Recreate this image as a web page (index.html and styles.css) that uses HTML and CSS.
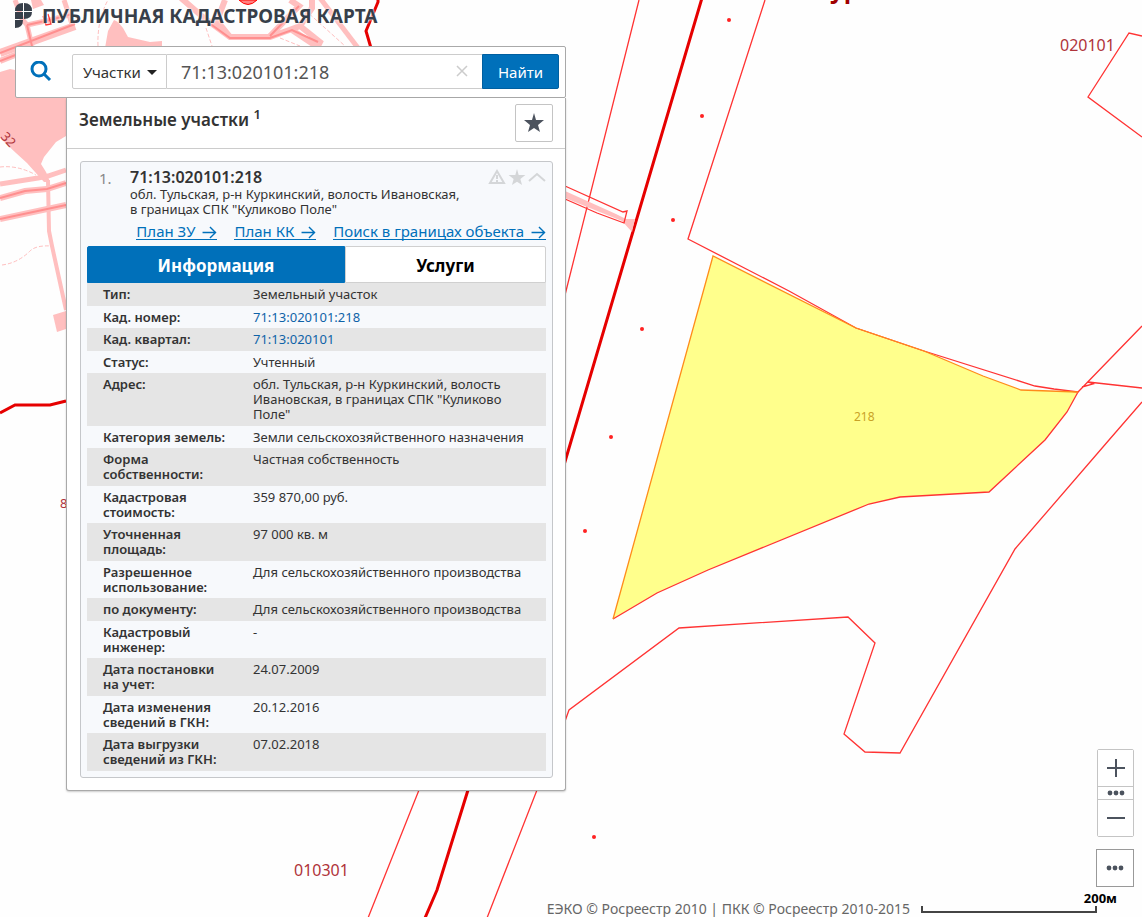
FILE: index.html
```html
<!DOCTYPE html>
<html lang="ru">

<head>
  <meta charset="UTF-8" />
  <meta name="viewport" content="width=device-width, initial-scale=1.0" />
  <title>Публичная кадастровая карта</title>
  <link rel="stylesheet" href="styles.css">
</head>

<body>
  <div class="page">
    <svg class="map" viewBox="0 0 1142 917" preserveAspectRatio="xMinYMin slice" aria-hidden="true">
      <!-- settlement in the corner -->
      <g class="town">
        <path d="M0 72L10 69L20 71L66 98V136L56 142L44 157L41 164L46 172L50 182H44L35 172L27 163L16 153L0 138Z" />
        <path d="M105 48L108 31L114 20L118 22L123 28L128 37L150 42L162 41V48Z" />
        <path d="M31 0H41L44 5L33 9Z" />
        <path d="M53 315L66 311V329L57 332Z" />
      </g>
      <g class="road">
        <path d="M0 53L75 26" stroke-width="8" />
        <path d="M0 61L20 53" stroke-width="6" />
        <path d="M15 0L22 19L27 25L32 46M27 25L50 20L72 14M64 0L72 24" stroke-width="5" />
        <path d="M181 -2L204 18L230 37H270L292 29L300 26L312 8V0M270 36L299 6L290 0M292 30L316 46M300 26L320 42L316 50M230 37L217 21L225 0" stroke-width="6" />
        <path d="M320 -2L358 48" stroke-width="5" />
        <path d="M0 184L38 178L48 176L66 170" stroke-width="5" />
        <path d="M0 198L25 191L47 189L66 183" stroke-width="6" />
        <path d="M0 219L66 205" stroke-width="6" />
        <path d="M48 180L49 231L52 246L66 310" stroke-width="4" />
      </g>
      <g class="road-axis">
        <path d="M0 53L75 24M0 61L18 54M27 25L32 46M27 25L50 20L72 14" />
        <path d="M205 20L230 38H270L292 30L318 42M270 36L299 6" />
        <path d="M0 198L25 191L47 189L66 183M0 219L66 205" />
      </g>
      <path class="trail" d="M0 167Q18 165 36 175M2 265Q18 263 30 251Q36 245 52 246M98 46Q97 20 108 0M206 28L212 46M280 38L300 46M305 10L345 46" />
      <path class="spot" d="M239 0Q248 9 257 0Z" />
      <path class="parcel" d="M43 16L46 25L51 24L48 14" />
      <path class="quarter" d="M378 -2V2L366 31L371 48" />

      <!-- quarter borders -->
      <path class="quarter" d="M702 -2L468 790L437 890L425 918M0 413L15 405H50L66 401" />
      <path class="parcel" d="M639 0L565 295M419 790L368 918M537 790L487 918" />
      <path class="flare" d="M565 191L616 214L626 219H635L632 232L622 221L565 198Z" />
      <path class="parcel" d="M565 186L623 212L627 211L624 223L597 213L565 199" />
      <path class="parcel" d="M1142 36L1129 33L1088 97L1142 137" />
      <path class="parcel" d="M1142 402L1109 440L1015 549L900 753L865 752L844 734L875 643L848 617L679 628L569 710L564 724" />

      <!-- selected plot -->
      <path class="plot" d="M713 256L856 328L924 351L983 376L1021 390L1078 392L1067 412L1045 440L989 492L900 497L869 504L708 570L657 593L613 619Z" />
      <path class="parcel" d="M1078 392L1067 412L1045 440L989 492L900 497L869 504L708 570L657 593L613 619" />
      <path class="parcel" d="M765 0L688 239L789 291L856 328L924 351L1035 386L1054 389L1078 392L1142 326M1082 387L1093 384L1088 382L1142 388" />
      <path class="plot-edge" d="M613 619L713 256L856 328L924 351L983 376L1021 390L1078 392" />

      <g class="dots">
        <circle cx="729" cy="20" r="2" />
        <circle cx="702" cy="116" r="2" />
        <circle cx="673" cy="220" r="2" />
        <circle cx="642" cy="329" r="2" />
        <circle cx="611" cy="437" r="2" />
        <circle cx="585" cy="531" r="2" />
        <circle cx="594" cy="837" r="2" />
      </g>
      <g class="labels">
        <text x="1060" y="51">020101</text>
        <text x="294" y="876">010301</text>
        <text class="small" x="60" y="508">8</text>
        <text class="small" transform="translate(0 137) rotate(48)">32</text>
        <text class="plot-no" x="854" y="421">218</text>
        <text class="place" x="830" y="-2">ур</text>
      </g>
    </svg>

    <header class="header">
      <svg class="logo" width="17" height="25" viewBox="0 0 17 25" aria-hidden="true">
        <path d="M8 0V8H0Q0 0 8 0ZM9 0Q17 0 17 8H9ZM9 9H17Q17 16 9 16ZM0 9H8V16H0ZM0 17H8Q8 25 0 25Z" />
      </svg>
      <h1>ПУБЛИЧНАЯ КАДАСТРОВАЯ КАРТА</h1>
    </header>

    <main class="panel">
      <form class="search">
        <svg class="search-icon" width="22" height="22" viewBox="0 0 22 22" aria-hidden="true">
          <circle cx="9" cy="8" r="7" />
          <path d="M14 13L20 19" />
        </svg>
        <div class="search-fields">
          <div class="select-wrap">
            <select class="kind" aria-label="Что искать">
              <option>Участки</option>
            </select>
            <svg class="caret" width="10" height="5" viewBox="0 0 10 5" aria-hidden="true">
              <path d="M0 0H10L5 5Z" />
            </svg>
          </div>
          <div class="query-wrap">
            <input class="query" type="text" value="71:13:020101:218" aria-label="Кадастровый номер" />
            <button class="clear" type="button" aria-label="Очистить">
              <svg width="12" height="12" viewBox="0 0 12 12">
                <path d="M1 1L11 11M11 1L1 11" />
              </svg>
            </button>
          </div>
          <button class="find" type="submit">Найти</button>
        </div>
      </form>

      <section class="results">
        <div class="results-head">
          <h2>Земельные участки <sup>1</sup></h2>
          <button class="favorites" aria-label="Избранное">
            <svg width="20" height="20" viewBox="0 0 20 20">
              <path d="M10 0L12 7H20L14 12L16 19L10 15L4 19L6 12L0 7H8Z" />
            </svg>
          </button>
        </div>

        <article class="card">
          <div class="card-head">
            <span class="num">1.</span>
            <div class="card-title">
              <h3>71:13:020101:218</h3>
              <p>обл. Тульская, р-н Куркинский, волость Ивановская, в&nbsp;границах СПК "Куликово Поле"</p>
            </div>
            <div class="card-tools">
              <button aria-label="Сообщить об ошибке">
                <svg width="18" height="16" viewBox="0 0 18 16">
                  <path class="line" d="M9 2L16 14H2Z" />
                  <path class="line" d="M9 6V10M9 11V13" />
                </svg>
              </button>
              <button aria-label="В избранное">
                <svg width="18" height="16" viewBox="0 0 20 19">
                  <path d="M10 0L12 7H20L14 12L16 19L10 15L4 19L6 12L0 7H8Z" />
                </svg>
              </button>
              <button aria-label="Свернуть">
                <svg width="18" height="16" viewBox="0 0 18 16">
                  <path class="line" d="M1 12L9 5L17 12" />
                </svg>
              </button>
            </div>
          </div>

          <nav class="card-links">
            <a href="#">План ЗУ <svg class="arrow" width="15" height="14" viewBox="0 0 15 14"><path d="M0 7H14M8 1L14 7L8 13" /></svg></a>
            <a href="#">План КК <svg class="arrow" width="15" height="14" viewBox="0 0 15 14"><path d="M0 7H14M8 1L14 7L8 13" /></svg></a>
            <a href="#">Поиск в границах объекта <svg class="arrow" width="15" height="14" viewBox="0 0 15 14"><path d="M0 7H14M8 1L14 7L8 13" /></svg></a>
          </nav>

          <div class="tabs">
            <button class="tab active">Информация</button>
            <button class="tab">Услуги</button>
          </div>

          <table class="info">
            <tr><th scope="row">Тип:</th><td>Земельный участок</td></tr>
            <tr><th scope="row">Кад. номер:</th><td><a href="#">71:13:020101:218</a></td></tr>
            <tr><th scope="row">Кад. квартал:</th><td><a href="#">71:13:020101</a></td></tr>
            <tr><th scope="row">Статус:</th><td>Учтенный</td></tr>
            <tr><th scope="row">Адрес:</th><td>обл. Тульская, р-н Куркинский, волость Ивановская, в границах СПК "Куликово Поле"</td></tr>
            <tr><th scope="row">Категория земель:</th><td>Земли сельскохозяйственного назначения</td></tr>
            <tr><th scope="row">Форма собственности:</th><td>Частная собственность</td></tr>
            <tr><th scope="row">Кадастровая стоимость:</th><td>359 870,00 руб.</td></tr>
            <tr><th scope="row">Уточненная площадь:</th><td>97 000 кв. м</td></tr>
            <tr><th scope="row">Разрешенное использование:</th><td>Для сельскохозяйственного производства</td></tr>
            <tr><th scope="row">по документу:</th><td>Для сельскохозяйственного производства</td></tr>
            <tr><th scope="row">Кадастровый инженер:</th><td>-</td></tr>
            <tr><th scope="row">Дата постановки на учет:</th><td>24.07.2009</td></tr>
            <tr><th scope="row">Дата изменения сведений в ГКН:</th><td>20.12.2016</td></tr>
            <tr><th scope="row">Дата выгрузки сведений из ГКН:</th><td>07.02.2018</td></tr>
          </table>
        </article>
      </section>
    </main>

    <div class="map-controls">
      <div class="zoom">
        <button aria-label="Приблизить">
          <svg width="18" height="18" viewBox="0 0 18 18"><path d="M0 9H18M9 0V18" /></svg>
        </button>
        <button class="zoom-levels" aria-label="Масштаб">
          <svg class="dots-icon" width="18" height="6" viewBox="0 0 18 6"><circle cx="3" cy="3" r="2.4" /><circle cx="9" cy="3" r="2.4" /><circle cx="15" cy="3" r="2.4" /></svg>
        </button>
        <button aria-label="Отдалить">
          <svg width="18" height="18" viewBox="0 0 18 18"><path d="M0 9H18" /></svg>
        </button>
      </div>
      <button class="more" aria-label="Ещё">
        <svg class="dots-icon" width="18" height="6" viewBox="0 0 18 6"><circle cx="3" cy="3" r="2.4" /><circle cx="9" cy="3" r="2.4" /><circle cx="15" cy="3" r="2.4" /></svg>
      </button>
    </div>

    <footer class="map-footer">
      <span class="copyright">ЕЭКО © Росреестр 2010 | ПКК © Росреестр 2010-2015</span>
      <div class="scale"><span>200м</span></div>
    </footer>
  </div>
</body>

</html>
```

FILE: styles.css
```css
* {
  box-sizing: border-box;
}

body {
  margin: 0;
  font-family: "Noto Sans", "Open Sans", sans-serif;
  font-size: 13px;
  line-height: 15px;
  color: #333;
  background: #fefefe;
}

button,
input,
select {
  font-family: inherit;
  color: inherit;
}

button {
  padding: 0;
  background: #fff;
  border: 1px solid #c4c4c4;
  cursor: pointer;
}

.page {
  position: relative;
  min-height: 100vh;
  padding-left: 15px;
  overflow: hidden;
}

/* map */
.map {
  position: absolute;
  top: 0;
  left: 0;
  width: 100%;
  height: 100%;
}

.map path {
  fill: none;
}

.map .town path,
.map .flare {
  fill: #ffbfbf;
}

.road path {
  stroke: #ffbfbf;
}

.road-axis path {
  stroke: #ff8f8f;
  stroke-width: 2;
}

.trail {
  stroke: #ffbfbf;
  stroke-dasharray: 4 2;
}

.map .spot {
  fill: #ff8080;
  stroke: #f00;
}

.parcel {
  stroke: #f33;
  stroke-width: 1.3;
}

.quarter {
  stroke: #e60000;
  stroke-width: 3;
}

.map .plot {
  fill: #ffff8c;
}

.plot-edge {
  stroke: #ff8c1a;
  stroke-width: 1.3;
}

.dots {
  fill: #f22;
}

.labels {
  font-size: 16px;
  fill: #b0343a;
}

.labels .small {
  font-size: 13px;
}

.labels .plot-no {
  font-size: 12px;
  fill: #c9a227;
}

.labels .place {
  font-size: 24px;
  font-weight: bold;
  fill: #a00000;
}

/* header */
.header {
  position: relative;
  display: flex;
  gap: 10px;
  height: 46px;
  padding-top: 3px;
}

.logo {
  fill: #373f4a;
}

.header h1 {
  margin: 0;
  font-size: 19px;
  line-height: 26px;
  color: #373f4a;
  text-shadow: 0 0 2px #fff, 0 0 2px #fff;
}

/* search */
.panel {
  position: relative;
  width: 551px;
  max-width: 100%;
}

.search {
  display: flex;
  align-items: center;
  justify-content: space-between;
  height: 52px;
  padding: 0 6px 1px 14px;
  background: #fff;
  border: 1px solid #a9a9a9;
  border-radius: 2px;
}

.search-icon {
  fill: none;
  stroke: #0070ba;
  stroke-width: 3;
}

.search-fields {
  display: flex;
  width: 487px;
  height: 35px;
}

.select-wrap {
  position: relative;
  width: 95px;
}

.kind {
  width: 100%;
  height: 100%;
  padding: 0 10px;
  font-size: 15px;
  appearance: none;
  background: #fff;
  border: 1px solid #ccc;
  border-radius: 2px 0 0 2px;
}

.caret {
  position: absolute;
  top: 16px;
  right: 10px;
  fill: #222;
  pointer-events: none;
}

.query-wrap {
  position: relative;
  flex: 1;
}

.query {
  width: 100%;
  height: 100%;
  padding: 0 40px 0 14px;
  font-size: 18px;
  color: #555;
  border: 1px solid #ccc;
  border-width: 1px 0;
}

.clear {
  position: absolute;
  top: 11px;
  right: 14px;
  display: flex;
  border: 0;
}

.clear svg {
  stroke: #ccc;
  stroke-width: 1.5;
}

.find {
  width: 77px;
  font-size: 15px;
  color: #fff;
  background: #0070ba;
  border-color: #005fa0;
  border-radius: 0 2px 2px 0;
}

/* results */
.results {
  margin-left: 51px;
  padding-bottom: 12px;
  background: #fff;
  border: 1px solid #a9a9a9;
  border-top: 0;
  border-radius: 0 0 3px 3px;
  box-shadow: 0 1px 2px rgba(0, 0, 0, 0.2);
}

.results-head {
  display: flex;
  justify-content: space-between;
  height: 51px;
  padding: 6px 12px;
  border-bottom: 1px solid #ccc;
}

.results-head h2 {
  margin: 0;
  font-size: 17px;
  font-weight: 600;
  line-height: 32px;
}

.results-head sup {
  font-size: 13px;
  line-height: 0;
}

.favorites {
  display: flex;
  align-items: center;
  justify-content: center;
  width: 38px;
  height: 38px;
  border-radius: 2px;
  fill: #4c535e;
}

/* object card */
.card {
  margin: 12px 12px 0 13px;
  padding: 6px;
  background: #f7f9fc;
  border: 1px solid #c5c7ca;
  border-radius: 3px;
}

.card-head {
  display: flex;
}

.num {
  width: 43px;
  padding-left: 12px;
  font-size: 15px;
  line-height: 20px;
  color: #888;
}

.card-title {
  flex: 1;
}

.card-title h3 {
  margin: 0;
  font-size: 16px;
  font-weight: 600;
  line-height: 19px;
}

.card-title p {
  margin: 0;
}

.card-tools {
  display: flex;
  gap: 2px;
  padding-top: 1px;
}

.card-tools button {
  display: flex;
  height: 16px;
  background: none;
  border: 0;
  fill: #d4d6d8;
}

.card-tools .line {
  fill: none;
  stroke: #d4d6d8;
  stroke-width: 2;
}

.card-links {
  display: flex;
  justify-content: flex-end;
  gap: 17px;
  padding: 7px 0 6px;
}

.card-links a {
  font-size: 15px;
  line-height: 15px;
  color: #0070ba;
  text-decoration: none;
  border-bottom: 1px solid #0070ba;
}

.arrow {
  height: 13px;
  margin-left: 3px;
  vertical-align: -2px;
  fill: none;
  stroke: #0070ba;
  stroke-width: 1.5;
}

.tabs {
  display: flex;
}

.tab {
  flex: 7;
  height: 37px;
  padding-top: 1px;
  font-size: 17px;
  font-weight: bold;
  color: #000;
  border-color: #d0d0d0;
  border-radius: 0 2px 0 0;
}

.tab.active {
  flex: 9;
  color: #fff;
  background: #0070ba;
  border-color: #0070ba;
  border-radius: 2px 0 0 0;
}

.info {
  width: 100%;
  border-collapse: collapse;
}

.info th,
.info td {
  padding: 4px 8px 3px 0;
  text-align: left;
  vertical-align: top;
}

.info th {
  width: 166px;
  padding-left: 16px;
  padding-right: 24px;
  font-weight: 600;
}

.info tr:nth-child(odd) {
  background: #e5e5e5;
}

.info tr:nth-child(odd) th,
.info tr:nth-child(odd) td {
  padding-bottom: 4px;
}

.info a {
  color: #0f63a8;
  text-decoration: none;
}

/* controls over the map */
.map-controls {
  position: absolute;
  right: 8px;
  bottom: 30px;
  display: flex;
  flex-direction: column;
  align-items: flex-end;
  gap: 12px;
}

.zoom {
  display: flex;
  flex-direction: column;
  width: 37px;
  border: 1px solid #c4c4c4;
  border-radius: 2px;
}

.zoom button,
.more {
  display: flex;
  align-items: center;
  justify-content: center;
}

.zoom button {
  height: 36px;
  border: 0;
  stroke: #4c535e;
  stroke-width: 2;
}

.zoom .zoom-levels {
  height: 14px;
  border: 1px solid #c4c4c4;
  border-width: 1px 0;
}

.more {
  width: 38px;
  height: 38px;
  border-color: #999;
}

.zoom .dots-icon,
.more .dots-icon {
  fill: #4c535e;
  stroke: none;
}

.map-footer {
  position: absolute;
  right: 26px;
  bottom: 0;
  display: flex;
  align-items: flex-end;
}

.copyright {
  font-size: 14px;
  line-height: 16px;
  color: #666;
}

.scale {
  position: relative;
  width: 176px;
  height: 7px;
  margin: 0 19px 4px 11px;
  border: 2px solid #444;
  border-top: 0;
}

.scale span {
  position: absolute;
  right: -22px;
  bottom: 5px;
  font-weight: bold;
  color: #000;
}
```
